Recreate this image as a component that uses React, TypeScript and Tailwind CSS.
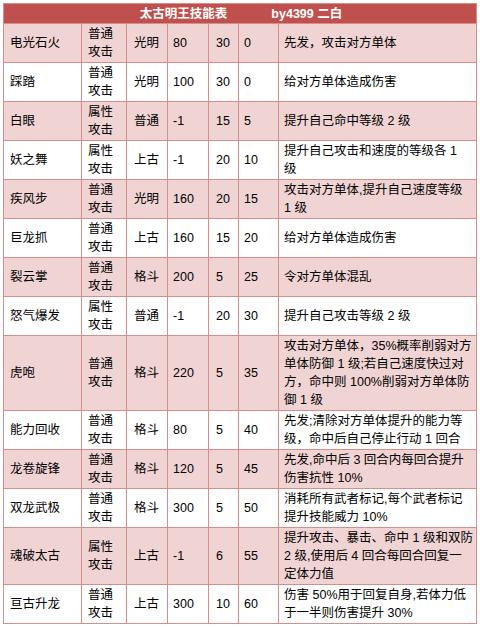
import React from "react";

type Row = [string, string, string, string, string, string, string[]];

const rows: Row[] = [
  ["电光石火", "普通", "光明", "80", "30", "0", ["先发，攻击对方单体"]],
  ["踩踏", "普通", "光明", "100", "30", "0", ["给对方单体造成伤害"]],
  ["白眼", "属性", "普通", "-1", "15", "5", ["提升自己命中等级 2 级"]],
  ["妖之舞", "属性", "上古", "-1", "20", "10", ["提升自己攻击和速度的等级各 1", "级"]],
  ["疾风步", "普通", "光明", "160", "20", "15", ["攻击对方单体,提升自己速度等级", "1 级"]],
  ["巨龙抓", "普通", "上古", "160", "15", "20", ["给对方单体造成伤害"]],
  ["裂云掌", "普通", "格斗", "200", "5", "25", ["令对方单体混乱"]],
  ["怒气爆发", "属性", "普通", "-1", "20", "30", ["提升自己攻击等级 2 级"]],
  [
    "虎咆",
    "普通",
    "格斗",
    "220",
    "5",
    "35",
    ["攻击对方单体，35%概率削弱对方", "单体防御 1 级;若自己速度快过对", "方，命中则 100%削弱对方单体防", "御 1 级"],
  ],
  ["能力回收", "普通", "格斗", "80", "5", "40", ["先发;清除对方单体提升的能力等", "级，命中后自己停止行动 1 回合"]],
  ["龙卷旋锋", "普通", "格斗", "120", "5", "45", ["先发,命中后 3 回合内每回合提升", "伤害抗性 10%"]],
  ["双龙武极", "普通", "格斗", "300", "5", "50", ["消耗所有武者标记,每个武者标记", "提升技能威力 10%"]],
  [
    "魂破太古",
    "属性",
    "上古",
    "-1",
    "6",
    "55",
    ["提升攻击、暴击、命中 1 级和双防", "2 级,使用后 4 回合每回合回复一", "定体力值"],
  ],
  ["亘古升龙", "普通", "上古", "300", "10", "60", ["伤害 50%用于回复自身,若体力低", "于一半则伤害提升 30%"]],
];

export default function App() {
  return (
    <div className="w-[480px] h-[626px] bg-white pl-[3px] pt-[3px] font-['Liberation_Sans','Noto_Sans_CJK_SC',sans-serif] text-[12.5px] leading-[18px] text-black">
      <table className="table-fixed border-collapse w-[473px] border border-[#d98c8c]">
        <colgroup>
          <col className="w-[78px]" />
          <col className="w-[45px]" />
          <col className="w-[41px]" />
          <col className="w-[41px]" />
          <col className="w-[30px]" />
          <col className="w-[40px]" />
          <col className="w-[198px]" />
        </colgroup>
        <thead>
          <tr>
            <th
              colSpan={7}
              className="h-[20px] bg-[#c0504d] border border-[#d98c8c] text-white font-bold text-center p-0 leading-[18px]"
            >
              <span className="pl-[2px]">太古明王技能表</span>
              <span className="inline-block w-[44px]" />
              <span>by4399 二白</span>
            </th>
          </tr>
        </thead>
        <tbody>
          {rows.map((r, i) => (
            <tr key={i} className={i % 2 === 0 ? "bg-[#f0d3d3]" : "bg-white"}>
              <td className="border border-[#d98c8c] pl-[6px] py-px align-middle whitespace-nowrap">{r[0]}</td>
              <td className="border border-[#d98c8c] pl-[6px] py-px align-middle whitespace-nowrap">
                {r[1]}
                <br />
                攻击
              </td>
              <td className="border border-[#d98c8c] pl-[7px] py-px align-middle whitespace-nowrap">{r[2]}</td>
              <td className="border border-[#d98c8c] pl-[5px] py-px align-middle whitespace-nowrap">{r[3]}</td>
              <td className="border border-[#d98c8c] pl-[7px] py-px align-middle whitespace-nowrap">{r[4]}</td>
              <td className="border border-[#d98c8c] pl-[5px] py-px align-middle whitespace-nowrap">{r[5]}</td>
              <td className="border border-[#d98c8c] pl-[5px] py-px align-middle whitespace-nowrap">
                {r[6].map((line, j) => (
                  <React.Fragment key={j}>
                    {j > 0 && <br />}
                    {line}
                  </React.Fragment>
                ))}
              </td>
            </tr>
          ))}
        </tbody>
      </table>
    </div>
  );
}
